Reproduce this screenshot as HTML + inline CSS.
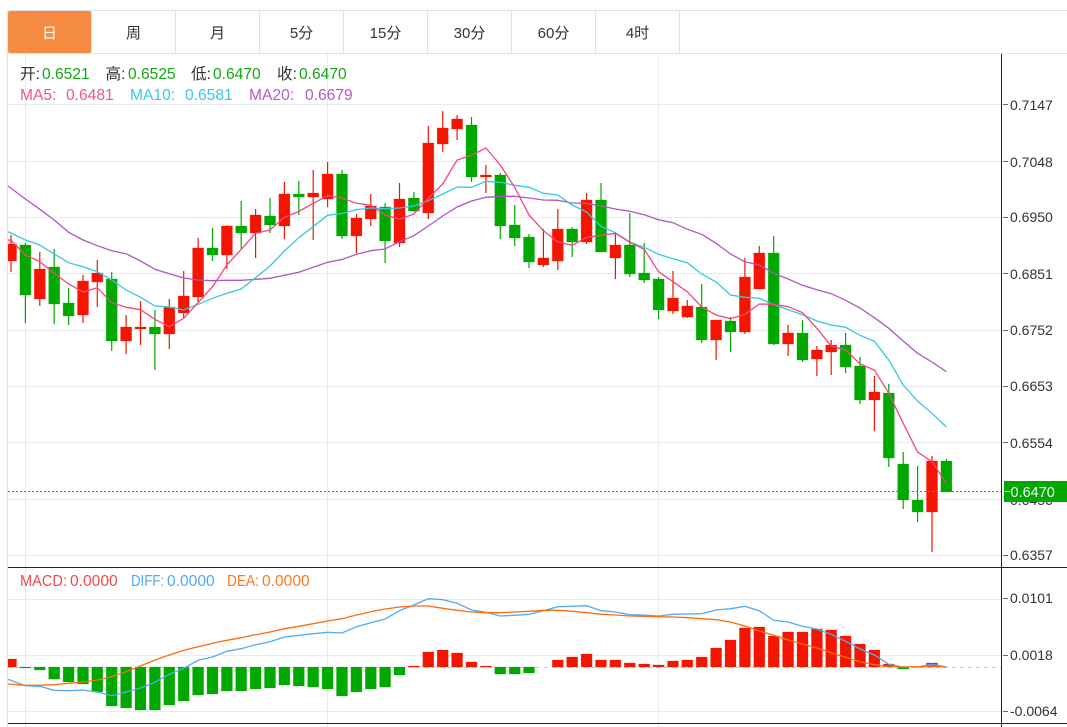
<!DOCTYPE html>
<html><head><meta charset="utf-8"><style>
html,body{margin:0;padding:0;background:#fff;width:1067px;height:727px;overflow:hidden}
svg{display:block;position:absolute;left:0;top:0}
text{font-family:"Liberation Sans","Noto Sans CJK SC",sans-serif}
.tab{font-size:15px;fill:#333;text-anchor:middle}
.h{font-size:15.6px}
.ax{font-size:14px;fill:#333}
</style></head><body>
<svg width="1067" height="727" viewBox="0 0 1067 727" xmlns="http://www.w3.org/2000/svg">
<defs><clipPath id="c"><rect x="8" y="54" width="993" height="673"/></clipPath></defs>
<!-- frame and tabs -->
<path d="M7 10.5H1067M7 53.5H1067M7.5 10V727M91.5 11V53M175.5 11V53M259.5 11V53M343.5 11V53M427.5 11V53M511.5 11V53M595.5 11V53M679.5 11V53" stroke="#dfe1e3" fill="none"/>
<rect x="8" y="11" width="83" height="42" rx="2" fill="#f58b42"/>
<text class="tab" x="49.5" y="38" style="fill:#fff">日</text>
<text class="tab" x="133.5" y="38">周</text>
<text class="tab" x="217.5" y="38">月</text>
<text class="tab" x="301.5" y="38">5分</text>
<text class="tab" x="385.5" y="38">15分</text>
<text class="tab" x="469.5" y="38">30分</text>
<text class="tab" x="553.5" y="38">60分</text>
<text class="tab" x="637.5" y="38">4时</text>
<!-- grid -->
<path d="M8 104.5H1001M8 161.5H1001M8 217.5H1001M8 273.5H1001M8 330.5H1001M8 386.5H1001M8 442.5H1001M8 499.5H1001M8 555.5H1001M8 599.5H1001M8 655.5H1001M8 711.5H1001M25.5 54V727M327.5 54V727M658.5 54V727" stroke="#e4ecf2" fill="none"/>
<g clip-path="url(#c)">
<!-- wicks -->
<path fill="none" stroke="#f41500" stroke-width="1.2" d="M11 235V272M39.8 252V306M83 275V323M97.3 260V307M126.1 315V354M140.5 301V345M169.3 299V349M183.7 271V318M198.1 238V302M226.9 225V269M255.6 209V258M284.4 182V239M313.2 170V240M327.6 162V207M356.4 214V253M370.8 194V226M399.5 183V247M428.3 126V219M442.7 111V152M457.1 115V140M485.9 165V193M543.4 229V267M557.8 209V270M586.6 193V244M615.4 232V279M673 271V314M687.3 300V318M716.1 320V360M744.9 258V334M759.3 246V289M788.1 325V356M816.9 346V376M831.2 340V375M874.4 376V431M932 456V552"/>
<path fill="none" stroke="#00a800" stroke-width="1.2" d="M25.4 243V323M54.2 249V324M68.6 288V325M111.7 272V351M154.9 310V370M212.5 228V261M241.2 201V249M270 198V233M298.8 181V215M342 170V239M385.1 203V263M413.9 192V212M471.5 117V182M500.3 173V239M514.7 205V246M529 234V268M572.2 227V257M601 183V252M629.8 213V277M644.2 243V283M658.6 277V319M701.7 284V343M730.5 317V352M773.7 236V345M802.5 320V362M845.6 333V373M860 357V404M888.8 384V467M903.2 452V509M917.6 466V522M946.4 459V492"/>
<!-- bodies -->
<path fill="#f41500" stroke="#f41500" stroke-opacity=".35" stroke-width=".8" d="M5.5 244h11v17h-11zM34.3 269h11v30h-11zM77.5 281h11v34h-11zM91.8 273h11v9h-11zM120.6 327h11v14h-11zM135 327h11v2h-11zM163.8 307h11v27h-11zM178.2 296h11v17h-11zM192.6 248h11v49h-11zM221.4 226h11v29h-11zM250.1 215h11v18h-11zM278.9 194h11v32h-11zM307.7 193h11v4h-11zM322.1 174h11v25h-11zM350.9 218h11v18h-11zM365.3 206h11v13h-11zM394 199h11v44h-11zM422.8 143h11v70h-11zM437.2 128h11v16h-11zM451.6 119h11v10h-11zM480.4 175h11v2h-11zM537.9 258h11v7h-11zM552.3 229h11v32h-11zM581.1 200h11v42h-11zM609.9 245h11v13h-11zM667.5 298h11v13h-11zM681.8 306h11v11h-11zM710.6 320h11v20h-11zM739.4 277h11v55h-11zM753.8 253h11v36h-11zM782.6 333h11v11h-11zM811.4 350h11v9h-11zM825.7 345h11v7h-11zM868.9 392h11v8h-11zM926.5 461h11v51h-11z"/>
<path fill="#00a800" stroke="#00a800" stroke-opacity=".35" stroke-width=".8" d="M19.9 245h11v50h-11zM48.7 267h11v37h-11zM63.1 303h11v13h-11zM106.2 279h11v62h-11zM149.4 327h11v7h-11zM207 248h11v7h-11zM235.7 226h11v7h-11zM264.5 216h11v9h-11zM293.3 194h11v3h-11zM336.5 174h11v62h-11zM379.6 207h11v34h-11zM408.4 198h11v13h-11zM466 125h11v52h-11zM494.8 175h11v51h-11zM509.2 225h11v13h-11zM523.5 237h11v25h-11zM566.7 229h11v13h-11zM595.5 200h11v52h-11zM624.3 245h11v29h-11zM638.7 273h11v7h-11zM653.1 279h11v31h-11zM696.2 307h11v33h-11zM725 321h11v11h-11zM768.2 253h11v91h-11zM797 333h11v27h-11zM840.1 345h11v22h-11zM854.5 366h11v34h-11zM883.3 393h11v65h-11zM897.7 464h11v36h-11zM912.1 500h11v12h-11zM940.9 461h11v31h-11z"/>
<!-- MA20 -->
<polyline fill="none" stroke="#b055c8" stroke-width="1.3" points="8,186 25.4,199 39.8,209.3 54.2,220 68.6,232.3 83,240 97.3,245.7 111.7,250.7 126.1,253.7 140.5,261 154.9,269.3 169.3,273.7 183.7,278 198.1,280 212.5,280.7 226.9,280.3 241.2,280.3 255.6,279.3 270,278.3 284.4,275.3 298.8,272.3 313.2,267.3 327.6,262.3 342,259.5 356.4,254.3 370.8,250.7 385.1,249 399.5,241.7 413.9,235.7 428.3,226 442.7,216 457.1,207 471.5,201 485.9,197.3 500.3,196.3 514.7,196.3 529,198 543.4,200 557.8,200.3 572.2,203 586.6,203.3 601,206 615.4,209 629.8,211.3 644.2,214.7 658.6,219.7 673,222.7 687.3,229.3 701.7,234.3 716.1,243.3 730.5,254 744.9,261.7 759.3,265 773.7,273.3 788.1,279 802.5,285.3 816.9,289.7 831.2,293.7 845.6,300.3 860,308 874.4,317.7 888.8,328.3 903.2,341 917.6,353.3 932,362 946.4,371.7"/>
<!-- MA10 -->
<polyline fill="none" stroke="#35c9e0" stroke-width="1.3" points="8,231.7 25.4,240 39.8,245 54.2,254 68.6,262.7 83,266.7 97.3,271.7 111.7,280 126.1,290 140.5,297.3 154.9,306 169.3,307 183.7,310 198.1,304.3 212.5,298.3 226.9,293.3 241.2,289 255.6,277.7 270,266 284.4,251 298.8,237.7 313.2,226.7 327.6,215.3 342,213.5 356.4,209.7 370.8,208 385.1,208.7 399.5,208 413.9,206 428.3,200.7 442.7,194 457.1,187 471.5,187.3 485.9,181.3 500.3,182.3 514.7,185.3 529,187.3 543.4,193.3 557.8,195 572.2,205 586.6,212 601,226.3 615.4,232.7 629.8,242 644.2,247.3 658.6,254.3 673,258.7 687.3,262.7 701.7,274 716.1,282 730.5,295 744.9,297.3 759.3,298.3 773.7,304.7 788.1,309.7 802.5,314.7 816.9,321 831.2,325 845.6,327.3 860,335.3 874.4,341.3 888.8,360 903.2,385 917.6,401 932,413.3 946.4,427"/>
<!-- MA5 -->
<polyline fill="none" stroke="#f5457f" stroke-width="1.3" points="8,240 11,240.3 25.4,255 39.8,261.7 54.2,273.3 68.6,284 83,292 97.3,287.7 111.7,302.7 126.1,307.3 140.5,309.7 154.9,319.3 169.3,326.7 183.7,318.3 198.1,302.7 212.5,286.7 226.9,265 241.2,249.3 255.6,233.3 270,230 284.4,217.3 298.8,211.5 313.2,203.3 327.6,195.7 342,198 356.4,203.3 370.8,205.3 385.1,215 399.5,219.3 413.9,214 428.3,198.3 442.7,184 457.1,160 471.5,155.3 485.9,148 500.3,165 514.7,187.3 529,215 543.4,230.7 557.8,242 572.2,245.3 586.6,237.3 601,235.3 615.4,233.3 629.8,242.3 644.2,249.3 658.6,271.7 673,281.7 687.3,291.7 701.7,307 716.1,315 730.5,318.7 744.9,314.3 759.3,304 773.7,304.3 788.1,306.7 802.5,312.7 816.9,328.3 831.2,346 845.6,350 860,364 874.4,370 888.8,393.3 903.2,423.3 917.6,452 932,461.7 946.4,483.3"/>
<!-- last price line -->
<path d="M8 491.5H1003" stroke="#22b422" stroke-dasharray="2 2" fill="none"/>
<!-- MACD zero line -->
<path d="M8 667.5H1001" stroke="#a9dcea" stroke-dasharray="4 4" fill="none"/>
<!-- MACD bars -->
<path fill="#f41500" stroke="#f41500" stroke-opacity=".3" stroke-width=".8" d="M5.5 659h11v8h-11zM408.4 666h11v1h-11zM422.8 652h11v15h-11zM437.2 650h11v17h-11zM451.6 653h11v14h-11zM466 662h11v5h-11zM480.4 666h11v1h-11zM552.3 660h11v7h-11zM566.7 657h11v10h-11zM581.1 654h11v13h-11zM595.5 660h11v7h-11zM609.9 660h11v7h-11zM624.3 663h11v4h-11zM638.7 664h11v3h-11zM653.1 665h11v2h-11zM667.5 661h11v6h-11zM681.8 660h11v7h-11zM696.2 657h11v10h-11zM710.6 648h11v19h-11zM725 640h11v27h-11zM739.4 628h11v39h-11zM753.8 627h11v40h-11zM768.2 636h11v31h-11zM782.6 632h11v35h-11zM797 632h11v35h-11zM811.4 629h11v38h-11zM825.7 630h11v37h-11zM840.1 636h11v31h-11zM854.5 644h11v23h-11zM868.9 650h11v17h-11zM883.3 664h11v3h-11zM926.5 663h11v4h-11z"/>
<path fill="#00a800" stroke="#00a800" stroke-opacity=".3" stroke-width=".8" d="M19.9 667h11v1h-11zM34.3 667h11v3h-11zM48.7 667h11v12h-11zM63.1 667h11v15h-11zM77.5 667h11v17h-11zM91.8 667h11v25h-11zM106.2 667h11v39h-11zM120.6 667h11v41h-11zM135 667h11v43h-11zM149.4 667h11v43h-11zM163.8 667h11v38h-11zM178.2 667h11v34h-11zM192.6 667h11v28h-11zM207 667h11v27h-11zM221.4 667h11v24h-11zM235.7 667h11v24h-11zM250.1 667h11v22h-11zM264.5 667h11v21h-11zM278.9 667h11v18h-11zM293.3 667h11v19h-11zM307.7 667h11v20h-11zM322.1 667h11v22h-11zM336.5 667h11v29h-11zM350.9 667h11v25h-11zM365.3 667h11v22h-11zM379.6 667h11v20h-11zM394 667h11v8h-11zM494.8 667h11v7h-11zM509.2 667h11v7h-11zM523.5 667h11v6h-11zM897.7 667h11v2h-11z"/>
<!-- DIFF -->
<polyline fill="none" stroke="#55aaf5" stroke-width="1.3" points="8,679.3 25.4,685.7 39.8,686.3 54.2,690.3 68.6,690.7 83,690 97.3,692 111.7,695.7 126.1,692 140.5,688 154.9,682.3 169.3,674.3 183.7,668.3 198.1,660.3 212.5,657 226.9,651.3 241.2,648.7 255.6,644.7 270,641.7 284.4,637 298.8,635.3 313.2,633.7 327.6,632.3 342,633 356.4,626.7 370.8,622.7 385.1,619 399.5,610.7 413.9,605 428.3,598.7 442.7,599.7 457.1,603.3 471.5,610 485.9,612.3 500.3,616 514.7,615.3 529,614.3 543.4,610.7 557.8,606.7 572.2,606.3 586.6,605.7 601,610.7 615.4,612 629.8,614.7 644.2,615 658.6,616 673,614.3 687.3,614 701.7,613.7 716.1,610 730.5,608.7 744.9,606.3 759.3,610.7 773.7,620.3 788.1,622 802.5,626.3 816.9,629 831.2,634.3 845.6,641.3 860,649 874.4,655 888.8,664.3 903.2,667 917.6,667 932,664.3 946.4,667"/>
<!-- DEA -->
<polyline fill="none" stroke="#ff6d10" stroke-width="1.3" points="8,684 25.4,685.3 39.8,685.3 54.2,684.7 68.6,683.3 83,682 97.3,680 111.7,676.7 126.1,671.7 140.5,666 154.9,660 169.3,655 183.7,650.3 198.1,646.7 212.5,643.3 226.9,640.3 241.2,637.7 255.6,634.7 270,632 284.4,628.7 298.8,626.3 313.2,623.7 327.6,621 342,618.7 356.4,615 370.8,611.7 385.1,609 399.5,607 413.9,606 428.3,606 442.7,608.3 457.1,610.3 471.5,612 485.9,612.7 500.3,612.7 514.7,612 529,611.3 543.4,610.3 557.8,610.3 572.2,611.3 586.6,612.7 601,614.3 615.4,615 629.8,616 644.2,616.3 658.6,616.7 673,617 687.3,617.7 701.7,618.7 716.1,619.7 730.5,622 744.9,626 759.3,631 773.7,635.3 788.1,640 802.5,644 816.9,648 831.2,652.7 845.6,657.3 860,661.7 874.4,664.7 888.8,666.7 903.2,667 917.6,666.7 932,666 946.4,667"/>
</g>
<!-- header text -->
<text class="h" x="20" y="79" fill="#333">开:</text><text class="h" x="42" y="79" fill="#12a812">0.6521</text>
<text class="h" x="105.500" y="79" fill="#333">高:</text><text class="h" x="128" y="79" fill="#12a812">0.6525</text>
<text class="h" x="191" y="79" fill="#333">低:</text><text class="h" x="213" y="79" fill="#12a812">0.6470</text>
<text class="h" x="277" y="79" fill="#333">收:</text><text class="h" x="299" y="79" fill="#12a812">0.6470</text>
<text class="h" x="20" y="100" fill="#f0558a">MA5:</text><text class="h" x="66" y="100" fill="#f0558a">0.6481</text>
<text class="h" x="130" y="100" fill="#33cbe5">MA10:</text><text class="h" x="185" y="100" fill="#33cbe5">0.6581</text>
<text class="h" x="249" y="100" fill="#b35cc9">MA20:</text><text class="h" x="305" y="100" fill="#b35cc9">0.6679</text>
<text class="h" x="20" y="586" fill="#f24a4a" textLength="47" lengthAdjust="spacingAndGlyphs">MACD:</text><text class="h" x="70" y="586" fill="#f24a4a">0.0000</text>
<text class="h" x="131" y="586" fill="#4fa8f5" textLength="33" lengthAdjust="spacingAndGlyphs">DIFF:</text><text class="h" x="167" y="586" fill="#4fa8f5">0.0000</text>
<text class="h" x="227" y="586" fill="#f97a20" textLength="32" lengthAdjust="spacingAndGlyphs">DEA:</text><text class="h" x="262" y="586" fill="#f97a20">0.0000</text>
<!-- axes -->
<path d="M1001.5 54V727M8 567.5H1067M8 723.5H1067" stroke="#222" fill="none"/>
<path d="M1003 104.500H1008M1003 161.500H1008M1003 217.500H1008M1003 273.500H1008M1003 330.500H1008M1003 386.500H1008M1003 442.500H1008M1003 555.500H1008M1003 598.500H1008M1003 655.500H1008M1003 711.500H1008" stroke="#666" fill="none"/>
<text class="ax" x="1010" y="110">0.7147</text>
<text class="ax" x="1010" y="167">0.7048</text>
<text class="ax" x="1010" y="222">0.6950</text>
<text class="ax" x="1010" y="279">0.6851</text>
<text class="ax" x="1010" y="335">0.6752</text>
<text class="ax" x="1010" y="391">0.6653</text>
<text class="ax" x="1010" y="448">0.6554</text>
<text class="ax" x="1010" y="505">0.6456</text>
<text class="ax" x="1010" y="560">0.6357</text>
<text class="ax" x="1010" y="603">0.0101</text>
<text class="ax" x="1010" y="660">0.0018</text>
<text class="ax" x="1010" y="716">-0.0064</text>
<rect x="1004" y="481" width="63" height="21" fill="#00a800"/>
<path d="M1005 491.500H1010" stroke="#fff" fill="none"/>
<text x="1010.500" y="497" font-size="14.500" fill="#fff">0.6470</text>
</svg>
</body></html>
